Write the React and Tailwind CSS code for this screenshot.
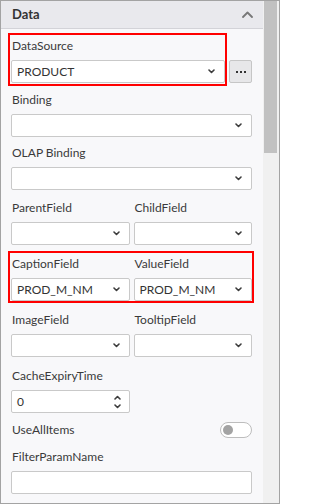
import React from "react";

const font = { fontFamily: "Lato, 'Noto Sans', sans-serif" };

function Chevron() {
  return (
    <svg width="7" height="5" viewBox="0 0 7 5" className="shrink-0">
      <path d="M1 1 L3.5 3.5 L6 1" fill="none" stroke="#3c3c3c" strokeWidth="1.6" strokeLinecap="round" strokeLinejoin="round" />
    </svg>
  );
}

function Select({ value = "", className = "" }) {
  return (
    <div className={`h-[23px] bg-white border border-[#c9c9c9] rounded-[2px] flex items-center justify-between pl-[5px] pr-[9px] text-[12px] text-[#333] ${className}`}>
      <span className="leading-none">{value}</span>
      <Chevron />
    </div>
  );
}

function Label({ children }) {
  return <div className="h-[16px] leading-[16px] text-[12px] text-[#3a3a3a] pl-[1px]">{children}</div>;
}

export default function App() {
  return (
    <div style={font} className="relative w-[280px] h-[504px] border border-[#a3a3a3] flex overflow-hidden bg-[#f8f8fa]">
      <div className="w-[262px] flex flex-col">
        <div className="h-[28px] shrink-0 bg-[#e9e9ed] border-b border-[#d3d3d8] flex items-center justify-between pl-[11px] pr-[10px]">
          <span className="text-[13px] font-bold text-[#333]">Data</span>
          <svg width="11" height="7" viewBox="0 0 11 7">
            <path d="M1 6 L5.5 1.5 L10 6" fill="none" stroke="#787878" strokeWidth="1.8" strokeLinecap="round" strokeLinejoin="round" />
          </svg>
        </div>
        <div className="pl-[10px] pr-[11px] flex flex-col">
          <div className="mt-[9px]">
            <Label>DataSource</Label>
            <div className="mt-[6px] flex gap-[4px]">
              <Select value="PRODUCT" className="flex-1" />
              <div className="w-[23px] h-[23px] bg-[#e7e7e9] border border-[#c6c6c6] rounded-[2px] flex items-center justify-center gap-[2px]">
                <span className="w-[2px] h-[2px] bg-[#333]" />
                <span className="w-[2px] h-[2px] bg-[#333]" />
                <span className="w-[2px] h-[2px] bg-[#333]" />
              </div>
            </div>
          </div>
          <div className="mt-[9px]">
            <Label>Binding</Label>
            <Select className="mt-[6px]" />
          </div>
          <div className="mt-[8px]">
            <Label>OLAP Binding</Label>
            <Select className="mt-[6px]" />
          </div>
          <div className="mt-[10px] grid grid-cols-2 gap-x-[4px]">
            <div>
              <Label>ParentField</Label>
              <Select className="mt-[6px]" />
            </div>
            <div>
              <Label>ChildField</Label>
              <Select className="mt-[6px]" />
            </div>
          </div>
          <div className="mt-[11px] grid grid-cols-2 gap-x-[4px]">
            <div>
              <Label>CaptionField</Label>
              <Select value="PROD_M_NM" className="mt-[6px]" />
            </div>
            <div>
              <Label>ValueField</Label>
              <Select value="PROD_M_NM" className="mt-[6px]" />
            </div>
          </div>
          <div className="mt-[11px] grid grid-cols-2 gap-x-[4px]">
            <div>
              <Label>ImageField</Label>
              <Select className="mt-[6px]" />
            </div>
            <div>
              <Label>TooltipField</Label>
              <Select className="mt-[6px]" />
            </div>
          </div>
          <div className="mt-[11px] grid grid-cols-2 gap-x-[4px]">
            <div>
              <Label>CacheExpiryTime</Label>
              <div className="mt-[6px] h-[23px] bg-white border border-[#c9c9c9] rounded-[2px] flex items-center justify-between pl-[5px] pr-[8px] text-[12px] text-[#333]">
                <span className="leading-none">0</span>
                <div className="flex flex-col gap-[4px]">
                  <svg width="7" height="5" viewBox="0 0 7 5">
                    <path d="M1 4 L3.5 1.5 L6 4" fill="none" stroke="#3c3c3c" strokeWidth="1.6" strokeLinecap="round" strokeLinejoin="round" />
                  </svg>
                  <svg width="7" height="5" viewBox="0 0 7 5">
                    <path d="M1 1 L3.5 3.5 L6 1" fill="none" stroke="#3c3c3c" strokeWidth="1.6" strokeLinecap="round" strokeLinejoin="round" />
                  </svg>
                </div>
              </div>
            </div>
          </div>
          <div className="mt-[9px] h-[16px] flex items-center justify-between">
            <span className="text-[12px] text-[#3a3a3a] pl-[1px]">UseAllItems</span>
            <div className="w-[32px] h-[16px] rounded-full border border-[#bdbdbd] bg-white flex items-center pl-[2px]">
              <div className="w-[10px] h-[10px] rounded-full bg-[#a3a3a3]" />
            </div>
          </div>
          <div className="mt-[11px]">
            <Label>FilterParamName</Label>
            <div className="mt-[6px] h-[23px] bg-white border border-[#c9c9c9] rounded-[2px]" />
          </div>
        </div>
      </div>
      <div className="w-[16px] bg-[#f0f0f0] shrink-0">
        <div className="ml-[1px] w-[13px] h-[152px] bg-[#c1c1c1]" />
      </div>
      <div className="absolute left-[7px] top-[32px] w-[219px] h-[53px] border-2 border-[#ff0000]" />
      <div className="absolute left-[7px] top-[250px] w-[246px] h-[52px] border-2 border-[#ff0000]" />
    </div>
  );
}
